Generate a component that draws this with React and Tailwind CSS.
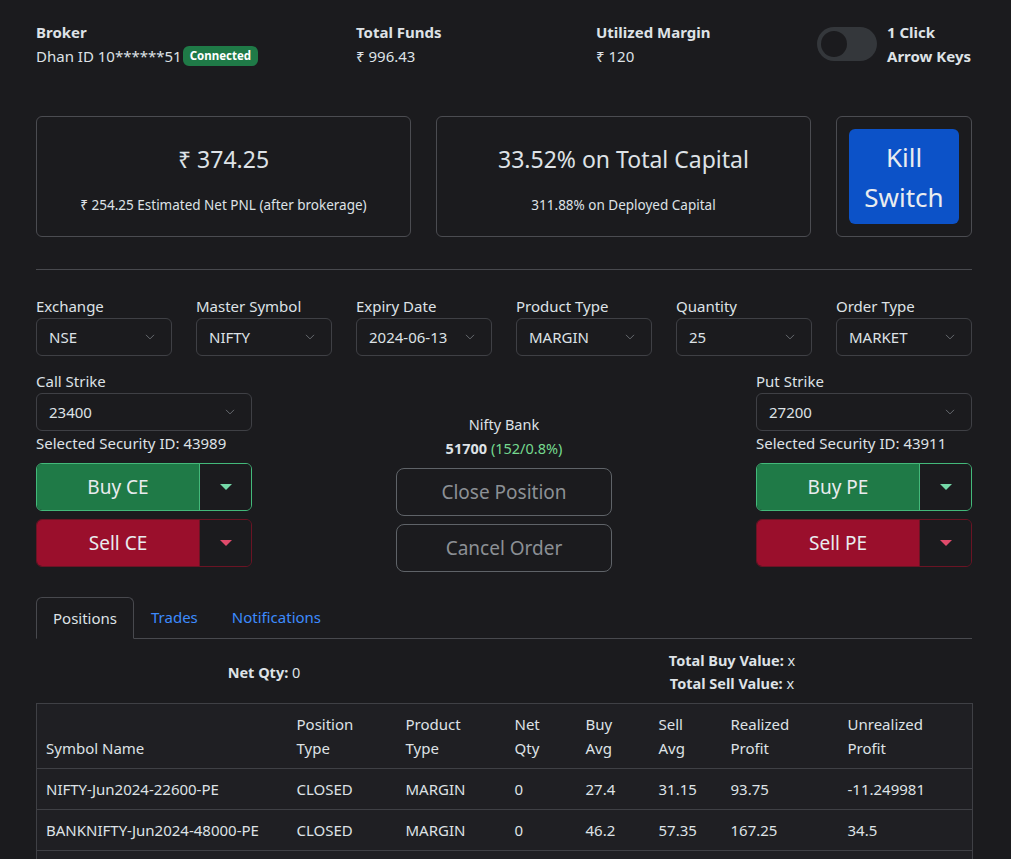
import React from "react";

const font = { fontFamily: '"Noto Sans", "Open Sans", sans-serif' };

function Chevron() {
  return (
    <svg width="14" height="10" viewBox="0 0 16 16" className="shrink-0">
      <path d="M2 5l6 6 6-6" fill="none" stroke="#6b6e73" strokeWidth="1.5" strokeLinecap="round" strokeLinejoin="round" />
    </svg>
  );
}

function Select({ value }) {
  return (
    <div className="flex h-[38px] items-center justify-between rounded-[6px] border border-[#3f4045] bg-[#1b1b1e] pl-[12px] pr-[14px] text-[15px] text-[#dee2e6]">
      <span>{value}</span>
      <Chevron />
    </div>
  );
}

function Field({ label, value }) {
  return (
    <div className="flex w-[136px] flex-col">
      <div className="h-[24px] text-[15px] leading-[24px] text-[#dee2e6]">{label}</div>
      <Select value={value} />
    </div>
  );
}

function Caret({ color }) {
  return (
    <svg width="12" height="7" viewBox="0 0 12 7">
      <path d="M0 0h12L6 6z" fill={color} />
    </svg>
  );
}

function SplitButton({ label, type }) {
  const buy = type === "buy";
  return (
    <div className={`flex h-[48px] w-[216px] overflow-hidden rounded-[6px] border ${buy ? "border-[#43b97a]" : "border-[#6b1424]"}`}>
      <div className={`flex flex-1 items-center justify-center text-[19px] text-[#e9ecef] ${buy ? "bg-[#1f7a47]" : "bg-[#9a0f2c]"}`}>{label}</div>
      <div className={`flex w-[52px] items-center justify-center border-l ${buy ? "border-[#43b97a]" : "border-[#6b1424]"} bg-[#1b1b1e]`}>
        <Caret color={buy ? "#75d9a8" : "#e04b6b"} />
      </div>
    </div>
  );
}

function OutlineButton({ label }) {
  return (
    <div className="flex h-[48px] w-[216px] items-center justify-center rounded-[8px] border border-[#5f6368] text-[19px] text-[#8c9095]">
      {label}
    </div>
  );
}

const rows = [
  ["NIFTY-Jun2024-22600-PE", "CLOSED", "MARGIN", "0", "27.4", "31.15", "93.75", "-11.249981"],
  ["BANKNIFTY-Jun2024-48000-PE", "CLOSED", "MARGIN", "0", "46.2", "57.35", "167.25", "34.5"],
  ["NIFTY-Jun2024-23400-CE", "CLOSED", "MARGIN", "0", "52.1", "58.3", "155", "0"],
];

const widths = ["w-[251px]", "w-[109px]", "w-[109px]", "w-[71px]", "w-[73px]", "w-[72px]", "w-[117px]", "w-[134px]"];

export default function App() {
  return (
    <div className="min-h-[859px] w-full bg-[#1b1b1e] text-[#dee2e6]" style={font}>
      <div className="ml-[36px] w-[936px] pt-[20px]">
        {/* Top bar */}
        <div className="flex items-start whitespace-nowrap">
          <div className="w-[320px]">
            <div className="text-[15px] font-bold leading-[24px]">Broker</div>
            <div className="flex items-center text-[15px] leading-[24px]">
              Dhan ID 10******51
              <span className="ml-[1px] rounded-[6px] bg-[#1f7a47] px-[7px] py-[1px] text-[11.5px] font-bold leading-[18px] text-white">Connected</span>
            </div>
          </div>
          <div className="w-[240px]">
            <div className="text-[15px] font-bold leading-[24px]">Total Funds</div>
            <div className="text-[15px] leading-[24px]">₹ 996.43</div>
          </div>
          <div className="w-[221px]">
            <div className="text-[15px] font-bold leading-[24px]">Utilized Margin</div>
            <div className="text-[15px] leading-[24px]">₹ 120</div>
          </div>
          <div className="flex items-center gap-[10px]">
            <div className="flex h-[34px] w-[60px] items-center rounded-full bg-[#34373b] px-[4px]">
              <div className="h-[26px] w-[26px] rounded-full bg-[#1b1b1e]" />
            </div>
            <div className="text-[15px] font-bold leading-[24px]">
              <div>1 Click</div>
              <div>Arrow Keys</div>
            </div>
          </div>
        </div>

        {/* Cards */}
        <div className="mt-[48px] flex gap-[25px]">
          <div className="flex h-[121px] w-[375px] flex-col items-center justify-center rounded-[6px] border border-[#4b4c51] pt-[4px]">
            <div className="text-[23px] leading-[36px]">₹ 374.25</div>
            <div className="mt-[18px] text-[13.5px] leading-[21px]">₹ 254.25 Estimated Net PNL (after brokerage)</div>
          </div>
          <div className="flex h-[121px] w-[375px] flex-col items-center justify-center rounded-[6px] border border-[#4b4c51] pt-[4px]">
            <div className="text-[23px] leading-[36px]">33.52% on Total Capital</div>
            <div className="mt-[18px] text-[13.5px] leading-[21px]">311.88% on Deployed Capital</div>
          </div>
          <div className="flex h-[121px] w-[136px] items-center justify-center rounded-[6px] border border-[#4b4c51]">
            <div className="flex h-[95px] w-[110px] flex-col items-center justify-center rounded-[6px] bg-[#0c52c8] text-[26px] leading-[40px] text-[#e9ecef]">
              <span>Kill</span>
              <span>Switch</span>
            </div>
          </div>
        </div>

        <div className="mt-[32px] h-px bg-[#48494e]" />

        {/* Form row */}
        <div className="mt-[24px] flex justify-between">
          <Field label="Exchange" value="NSE" />
          <Field label="Master Symbol" value="NIFTY" />
          <Field label="Expiry Date" value="2024-06-13" />
          <Field label="Product Type" value="MARGIN" />
          <Field label="Quantity" value="25" />
          <Field label="Order Type" value="MARKET" />
        </div>

        {/* Trading row */}
        <div className="mt-[13px] flex justify-between">
          <div className="flex w-[216px] flex-col">
            <div className="h-[24px] text-[15px] leading-[24px]">Call Strike</div>
            <Select value="23400" />
            <div className="text-[15px] leading-[24px]">Selected Security ID: 43989</div>
            <div className="mt-[8px] flex flex-col gap-[8px]">
              <SplitButton label="Buy CE" type="buy" />
              <SplitButton label="Sell CE" type="sell" />
            </div>
          </div>
          <div className="flex w-[216px] flex-col items-center pt-[43px]">
            <div className="text-[14.5px] leading-[24px]">Nifty Bank</div>
            <div className="text-[14.5px] leading-[24px]">
              <span className="font-bold">51700</span> <span className="text-[#75d98f]">(152/0.8%)</span>
            </div>
            <div className="mt-[8px] flex flex-col gap-[8px]">
              <OutlineButton label="Close Position" />
              <OutlineButton label="Cancel Order" />
            </div>
          </div>
          <div className="flex w-[216px] flex-col">
            <div className="h-[24px] text-[15px] leading-[24px]">Put Strike</div>
            <Select value="27200" />
            <div className="text-[15px] leading-[24px]">Selected Security ID: 43911</div>
            <div className="mt-[8px] flex flex-col gap-[8px]">
              <SplitButton label="Buy PE" type="buy" />
              <SplitButton label="Sell PE" type="sell" />
            </div>
          </div>
        </div>

        {/* Tabs */}
        <div className="mt-[25px] flex border-b border-[#48494e]">
          <div className="-mb-px rounded-t-[6px] border border-[#48494e] border-b-[#1b1b1e] px-[16px] py-[8px] text-[15px] leading-[24px]">Positions</div>
          <div className="px-[17px] py-[8px] text-[15px] leading-[24px] text-[#3d8bfd]">Trades</div>
          <div className="px-[17px] py-[8px] text-[15px] leading-[24px] text-[#3d8bfd]">Notifications</div>
        </div>

        <div className="mt-[10px] flex">
          <div className="flex w-[456px] items-center justify-center text-[14.5px] leading-[24px]">
            <span className="font-bold">Net Qty:</span>&nbsp;0
          </div>
          <div className="flex w-[480px] flex-col items-center text-[14.5px] leading-[23px]">
            <div><span className="font-bold">Total Buy Value:</span> x</div>
            <div><span className="font-bold">Total Sell Value:</span> x</div>
          </div>
        </div>

        {/* Table */}
        <table className="mt-[8px] w-[936px] table-fixed border-collapse border border-[#3f4045] bg-[#1f1f23] text-[15px] leading-[24px]">
          <colgroup>
            {widths.map((w, i) => (
              <col key={i} className={w} />
            ))}
          </colgroup>
          <thead>
            <tr className="border-b border-[#3f4045]">
              {["Symbol Name", ["Position", "Type"], ["Product", "Type"], ["Net", "Qty"], ["Buy", "Avg"], ["Sell", "Avg"], ["Realized", "Profit"], ["Unrealized", "Profit"]].map((h, i) => (
                <th key={i} className="px-[9px] py-[8px] text-left align-bottom font-normal">
                  {Array.isArray(h) ? (
                    <>
                      {h[0]}
                      <br />
                      {h[1]}
                    </>
                  ) : (
                    h
                  )}
                </th>
              ))}
            </tr>
          </thead>
          <tbody>
            {rows.map((r, i) => (
              <tr key={i} className="border-b border-[#3f4045]">
                {r.map((c, j) => (
                  <td key={j} className="whitespace-nowrap px-[9px] py-[8px]">{c}</td>
                ))}
              </tr>
            ))}
          </tbody>
        </table>
        <div className="h-[40px]" />
      </div>
    </div>
  );
}
